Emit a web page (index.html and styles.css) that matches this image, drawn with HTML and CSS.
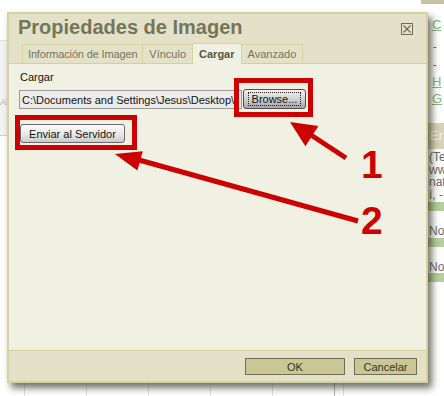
FILE: index.html
```html
<!DOCTYPE html>
<html lang="es">
<head>
  <meta charset="UTF-8" />
  <title>Propiedades de Imagen</title>
  <meta name="viewport" content="width=device-width, initial-scale=1.0"/>
  <link rel="stylesheet" href="styles.css">
</head>
<body>

  <!-- pagina de fondo -->
  <div class="page">
    <div class="page-left">
      <div class="left-box"><span>Al</span></div>
    </div>
    <div class="page-main">
      <div class="grid-row">
        <span></span><span></span><span></span><span></span><span></span><span class="dark"></span><span></span>
      </div>
    </div>
    <div class="page-right">
      <div class="top-bar"></div>
      <a class="side-link first" href="#">C</a>
      <span class="dash">-</span>
      <span class="dash">-</span>
      <a class="side-link" href="#">H</a>
      <a class="side-link" href="#">G</a>
      <div class="side-head">En</div>
      <div class="side-text">(Te<br>www<br>nat<br>í, -</div>
      <div class="green-bar"></div>
      <div class="side-text row">No,</div>
      <div class="green-bar"></div>
      <div class="side-text row">No</div>
      <div class="green-bar"></div>
    </div>
  </div>

  <!-- ventana de dialogo -->
  <div class="dialog">
    <div class="dlg-head">
      <div class="dlg-title-row">
        <h1>Propiedades de Imagen</h1>
        <svg class="close" width="12" height="12" viewBox="0 0 12 12">
          <rect x="0.5" y="0.5" width="11" height="11" fill="none" stroke="#6d6d5c"/>
          <path d="M2.5 2.5 L9.5 9.5 M9.5 2.5 L2.5 9.5" stroke="#6d6d5c" stroke-width="1.2"/>
        </svg>
      </div>
      <div class="tabs">
        <span class="tab tab-info">Información de Imagen</span>
        <span class="tab">Vínculo</span>
        <span class="tab active">Cargar</span>
        <span class="tab">Avanzado</span>
      </div>
    </div>

    <div class="dlg-body">
      <label for="archivo">Cargar</label>
      <div class="file-row">
        <input type="text" id="archivo" value="C:\Documents and Settings\Jesus\Desktop\foto.jpg">
        <button class="btn-gray btn-browse"><span>Browse...</span></button>
      </div>
      <button class="btn-gray btn-send">Enviar al Servidor</button>
    </div>

    <div class="dlg-foot">
      <button class="btn-olive btn-ok">OK</button>
      <button class="btn-olive btn-cancel">Cancelar</button>
    </div>
  </div>

  <!-- anotaciones -->
  <svg class="notes" width="444" height="396" viewBox="0 0 444 396">
    <g fill="none" stroke="#cc0000" stroke-width="5">
      <rect x="236.5" y="80.5" width="74" height="34"/>
      <rect x="17.5" y="117.5" width="117" height="30"/>
      <line x1="346" y1="158" x2="311" y2="135"/>
      <line x1="358" y1="221" x2="139" y2="160"/>
    </g>
    <g fill="#cc0000">
      <polygon points="290,122 318.4,126 305.4,146.2"/>
      <polygon points="115,154 142.8,151.3 137.4,170.5"/>
      <text class="num" x="361" y="178">1</text>
      <text class="num" x="361" y="234">2</text>
    </g>
  </svg>

</body>
</html>
```

FILE: styles.css
```css
body {
  margin: 0;
  padding: 0;
  width: 444px;
  height: 396px;
  overflow: hidden;
  position: relative;
  background: #ffffff;
  font-family: 'Liberation Sans', Arial, sans-serif;
  font-size: 11px;
}

/* Pagina detras del dialogo */
.page {
  display: flex;
  height: 396px;
}

.page-left {
  width: 12px;
  padding-top: 40px;
}

.left-box {
  height: 96px;
  background: #f3f3f3;
  border-top: 1px solid #e4e4e4;
  border-bottom: 1px solid #cfcfcf;
  color: #b0b0b0;
  font-size: 9px;
  padding-top: 56px;
  box-sizing: border-box;
}

.page-main {
  flex-grow: 1;
  display: flex;
  flex-direction: column;
  justify-content: flex-end;
}

.grid-row {
  display: flex;
  height: 16px;
  margin-left: 12px;
}

.grid-row span {
  width: 61px;
  border-left: 1px solid #e2e2e2;
}

.grid-row span.dark {
  width: 8px;
  border-left-color: #b4b4b4;
}

.page-right {
  width: 23px;
  display: flex;
  flex-direction: column;
  font-size: 13px;
  overflow: hidden;
}

.top-bar {
  height: 4px;
  background: #c8bfa5;
}

.side-link {
  color: #8cb67a;
  padding-left: 11px;
  line-height: 17px;
}

.side-link.first {
  margin-top: 12px;
  margin-bottom: 4px;
}

.dash {
  color: #555;
  padding-left: 12px;
  line-height: 18px;
  font-size: 11px;
}

.side-head {
  margin-top: 16px;
  height: 26px;
  background: #d8d2b8;
  color: #f4f2ea;
  line-height: 26px;
  padding-left: 9px;
}

.side-text {
  color: #6a6a6a;
  font-size: 12px;
  line-height: 12.5px;
  padding: 2px 0 1px 8px;
  white-space: nowrap;
}

.side-text.row {
  padding-top: 14px;
  padding-bottom: 0;
}

.green-bar {
  height: 9px;
  background: #b5cf9d;
}

/* Dialogo */
.dialog {
  position: absolute;
  left: 7px;
  top: 12px;
  width: 421px;
  height: 371px;
  box-sizing: border-box;
  border: 2px solid #d6d3a3;
  background: #f0f0e3;
  display: flex;
  flex-direction: column;
  box-shadow: 4px 5px 7px rgba(40, 40, 20, 0.65);
}

.dlg-head {
  background: #e3e2c9;
  border-bottom: 1px solid #d3d0a0;
  height: 49px;
  display: flex;
  flex-direction: column;
}

.dlg-title-row {
  display: flex;
  justify-content: space-between;
  padding: 1px 13px 4px 9px;
}

.dlg-title-row h1 {
  margin: 0;
  font-size: 20px;
  line-height: 24px;
  font-weight: bold;
  color: #75755a;
}

.close {
  margin-top: 8px;
}

.tabs {
  display: flex;
  align-items: flex-end;
  margin-left: 13px;
  height: 20px;
}

.tab {
  height: 18px;
  line-height: 18px;
  padding: 0 6px;
  border: 1px solid #d6d3a3;
  border-bottom: none;
  margin-right: -1px;
  color: #75755a;
  font-size: 11px;
}

.tab-info {
  padding: 0 5px;
  letter-spacing: -0.15px;
}

.tab.active {
  height: 20px;
  line-height: 20px;
  margin-bottom: -1px;
  background: #f0f0e3;
  color: #56563f;
  font-weight: bold;
  position: relative;
}

.dlg-body {
  flex-grow: 1;
  padding: 7px 10px 0 10px;
}

.dlg-body label {
  display: block;
  line-height: 13px;
  color: #111;
  margin-left: 1px;
}

.file-row {
  display: flex;
  margin-top: 5px;
  align-items: flex-start;
}

.file-row input {
  width: 223px;
  height: 19px;
  box-sizing: border-box;
  border: 1px solid #9a9a9a;
  background: #ebebea;
  padding: 0 2px;
  margin: 1px 0 0 0;
  font-family: inherit;
  font-size: 11px;
  color: #111;
}

.btn-gray {
  font-family: inherit;
  font-size: 11px;
  color: #111;
  border: 1px solid #6a6a6a;
  border-radius: 3px;
  background: linear-gradient(#fbfbfb, #e6e6e6 60%, #c9c9c9);
  padding: 0;
  cursor: pointer;
}

.btn-browse {
  width: 63px;
  height: 20px;
  margin-left: 1px;
  background: linear-gradient(#f2f2f2, #cfcfcf 55%, #a4a4a4);
  border-color: #4e4e4e;
}

.btn-browse span {
  display: inline-block;
  border: 1px dotted #222;
  padding: 0 3px;
  line-height: 12px;
}

.btn-send {
  display: block;
  width: 105px;
  height: 19px;
  margin: 15px 0 0 1px;
}

.dlg-foot {
  height: 31px;
  border-top: 1px solid #d3d0a0;
  background: #e3e2c9;
  display: flex;
  justify-content: flex-end;
  align-items: flex-start;
  gap: 9px;
  padding: 7px 9px 0 0;
  box-sizing: border-box;
}

.btn-olive {
  height: 17px;
  font-family: inherit;
  font-size: 11px;
  color: #333322;
  background: #c9c795;
  border: 1px solid #6e6e52;
  padding: 0;
  cursor: pointer;
}

.btn-ok {
  width: 100px;
}

.btn-cancel {
  width: 63px;
}

/* Flechas y recuadros rojos */
.notes {
  position: absolute;
  left: 0;
  top: 0;
}

.num {
  font-family: 'Liberation Sans', Arial, sans-serif;
  font-weight: bold;
  font-size: 39px;
}
```
